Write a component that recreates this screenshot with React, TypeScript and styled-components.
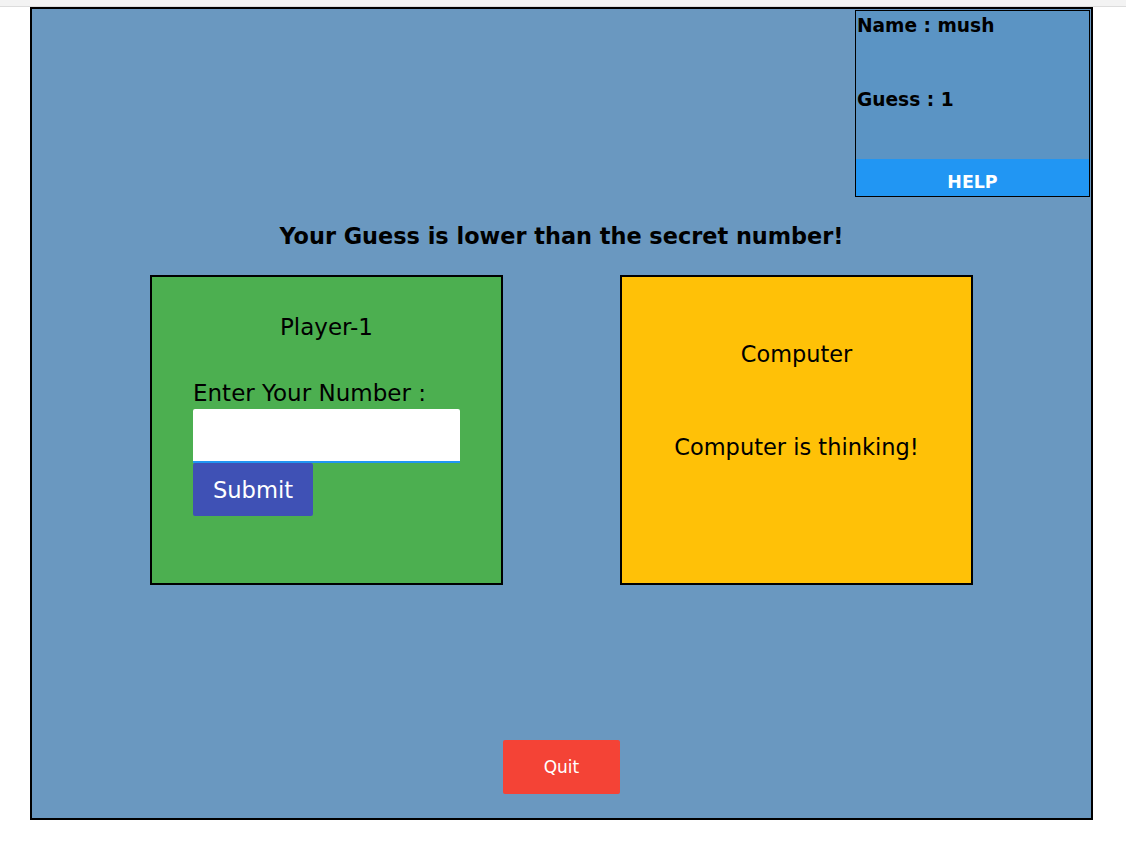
import React from "react";
import styled, { createGlobalStyle } from "styled-components";

const Global = createGlobalStyle`
  html, body { margin: 0; padding: 0; background: #ffffff; }
  body { font-family: "DejaVu Sans", Verdana, sans-serif; color: #000; }
  * { box-sizing: border-box; }
`;

const TopStrip = styled.div`
  height: 7px;
  background: #f3f3f3;
  border-bottom: 1px solid #dcdcdc;
`;

const Page = styled.div`
  padding-left: 30px;
`;

const Board = styled.div`
  width: 1063px;
  height: 813px;
  border: 2px solid #000;
  background: #6a98c0;
  display: flex;
  flex-direction: column;
  align-items: center;
`;

const InfoBox = styled.div`
  align-self: flex-end;
  margin: 1px 1px 0 0;
  width: 235px;
  height: 187px;
  border: 1px solid #000;
  background: #5b94c4;
  display: flex;
  flex-direction: column;
`;

const InfoLine = styled.div<{ $top: number }>`
  margin-top: ${(p) => p.$top}px;
  padding-left: 1px;
  font-size: 18.6px;
  line-height: 22px;
  font-weight: bold;
`;

const HelpBar = styled.div`
  margin-top: auto;
  height: 37px;
  background: #2196f3;
  color: #fff;
  font-weight: bold;
  font-size: 17.4px;
  display: flex;
  align-items: flex-end;
  justify-content: center;
  padding-bottom: 4px;
`;

const Heading = styled.div`
  margin-top: 26px;
  font-size: 22.4px;
  line-height: 26px;
  font-weight: bold;
`;

const Cards = styled.div`
  margin-top: 26px;
  display: flex;
  gap: 117px;
`;

const Card = styled.div<{ $bg: string }>`
  width: 353px;
  height: 310px;
  border: 2px solid #000;
  background: ${(p) => p.$bg};
  display: flex;
  flex-direction: column;
`;

const CardTitle = styled.div<{ $top: number; $size: number }>`
  margin-top: ${(p) => p.$top}px;
  text-align: center;
  font-size: ${(p) => p.$size}px;
  line-height: 26px;
`;

const Form = styled.div`
  margin-top: 40px;
  padding-left: 41px;
  display: flex;
  flex-direction: column;
  align-items: flex-start;
`;

const Label = styled.div`
  font-size: 23px;
  line-height: 26px;
  margin-bottom: 3px;
`;

const Input = styled.input`
  width: 267px;
  height: 54px;
  border: none;
  border-bottom: 2px solid #2196f3;
  border-radius: 2px 2px 0 0;
  background: #fff;
  outline: none;
  font-size: 18px;
  padding: 0 8px;
`;

const SubmitButton = styled.button`
  width: 120px;
  height: 53px;
  border: none;
  border-radius: 2px;
  background: #3f51b5;
  color: #fff;
  font-family: "DejaVu Sans", Verdana, sans-serif;
  font-size: 22.6px;
  padding: 0;
`;

const Thinking = styled.div`
  margin-top: 67px;
  text-align: center;
  font-size: 22.5px;
  line-height: 26px;
`;

const QuitButton = styled.button`
  margin-top: 155px;
  width: 117px;
  height: 54px;
  border: none;
  border-radius: 2px;
  background: #f44336;
  color: #fff;
  font-family: "DejaVu Sans", Verdana, sans-serif;
  font-size: 17px;
  padding: 0;
`;

export default function App() {
  return (
    <>
      <Global />
      <TopStrip />
      <Page>
        <Board>
          <InfoBox>
            <InfoLine $top={4}>Name : mush</InfoLine>
            <InfoLine $top={52}>Guess : 1</InfoLine>
            <HelpBar>HELP</HelpBar>
          </InfoBox>
          <Heading>Your Guess is lower than the secret number!</Heading>
          <Cards>
            <Card $bg="#4caf50">
              <CardTitle $top={37} $size={23}>Player-1</CardTitle>
              <Form>
                <Label>Enter Your Number :</Label>
                <Input type="text" />
                <SubmitButton>Submit</SubmitButton>
              </Form>
            </Card>
            <Card $bg="#ffc107">
              <CardTitle $top={64} $size={22.4}>Computer</CardTitle>
              <Thinking>Computer is thinking!</Thinking>
            </Card>
          </Cards>
          <QuitButton>Quit</QuitButton>
        </Board>
      </Page>
    </>
  );
}
